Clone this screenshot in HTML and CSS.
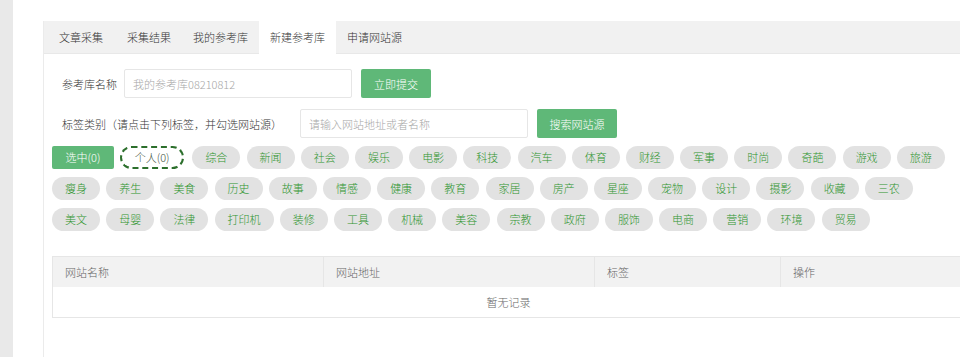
FILE: index.html
```html
<!DOCTYPE html>
<html lang="zh-CN">
  <head>
    <meta charset="UTF-8" />
    <title>新建参考库</title>
    <link rel="stylesheet" href="styles.css">
  </head>
  <body>
    <div class="page">
      <div class="rail"></div>
      <div class="main">
        <div class="panel">
          <ul class="tabs">
            <li>文章采集</li>
            <li>采集结果</li>
            <li>我的参考库</li>
            <li class="active">新建参考库</li>
            <li>申请网站源</li>
          </ul>

          <div class="panel-body">
            <div class="form-row first">
              <span class="form-label">参考库名称</span>
              <input class="input" type="text" placeholder="我的参考库08210812" />
              <button class="btn">立即提交</button>
            </div>

            <div class="form-row">
              <span class="form-label wide">标签类别（请点击下列标签，并勾选网站源）</span>
              <input class="input" type="text" placeholder="请输入网站地址或者名称" />
              <button class="btn btn-wide">搜索网站源</button>
            </div>

            <div class="tags">
              <span class="tag selected">选中(0)</span>
              <span class="tag mine">个人(0)</span>
              <span class="tag">综合</span>
              <span class="tag">新闻</span>
              <span class="tag">社会</span>
              <span class="tag">娱乐</span>
              <span class="tag">电影</span>
              <span class="tag">科技</span>
              <span class="tag">汽车</span>
              <span class="tag">体育</span>
              <span class="tag">财经</span>
              <span class="tag">军事</span>
              <span class="tag">时尚</span>
              <span class="tag">奇葩</span>
              <span class="tag">游戏</span>
              <span class="tag">旅游</span>
              <span class="tag">瘦身</span>
              <span class="tag">养生</span>
              <span class="tag">美食</span>
              <span class="tag">历史</span>
              <span class="tag">故事</span>
              <span class="tag">情感</span>
              <span class="tag">健康</span>
              <span class="tag">教育</span>
              <span class="tag">家居</span>
              <span class="tag">房产</span>
              <span class="tag">星座</span>
              <span class="tag">宠物</span>
              <span class="tag">设计</span>
              <span class="tag">摄影</span>
              <span class="tag">收藏</span>
              <span class="tag">三农</span>
              <span class="tag">美文</span>
              <span class="tag">母婴</span>
              <span class="tag">法律</span>
              <span class="tag">打印机</span>
              <span class="tag">装修</span>
              <span class="tag">工具</span>
              <span class="tag">机械</span>
              <span class="tag">美容</span>
              <span class="tag">宗教</span>
              <span class="tag">政府</span>
              <span class="tag">服饰</span>
              <span class="tag">电商</span>
              <span class="tag">营销</span>
              <span class="tag">环境</span>
              <span class="tag">贸易</span>
            </div>

            <table class="site-table">
              <colgroup>
                <col class="col-wide" />
                <col class="col-wide" />
                <col class="col-narrow" />
                <col />
              </colgroup>
              <thead>
                <tr>
                  <th>网站名称</th>
                  <th>网站地址</th>
                  <th>标签</th>
                  <th>操作</th>
                </tr>
              </thead>
              <tbody>
                <tr>
                  <td colspan="4">暂无记录</td>
                </tr>
              </tbody>
            </table>
          </div>
        </div>
      </div>
    </div>
  </body>
</html>
```

FILE: styles.css
```css
body {
  margin: 0;
  padding: 0;
  font-family: "Noto Sans CJK SC", "Microsoft YaHei", sans-serif;
  font-size: 11px;
  font-weight: 300;
  color: #333;
  background: #fff;
  overflow: hidden;
}

.page {
  display: flex;
  height: 357px;
}

.rail {
  flex: none;
  width: 13px;
  background: #e9e9e9;
}

.main {
  flex: none;
  padding: 21px 0 0 30px;
}

.panel {
  width: 930px;
  min-height: 336px;
  border-left: 1px solid #ebebeb;
}

/* tab bar */
.tabs {
  display: flex;
  margin: 0;
  padding: 0 0 0 4px;
  list-style: none;
  height: 32px;
  background: #f1f1f1;
  border-bottom: 1px solid #e8e8e8;
}

.tabs li {
  padding: 0 11px;
  line-height: 32px;
  cursor: pointer;
}

.tabs li:first-child {
  padding-right: 13px;
}

.tabs li.active {
  height: 33px;
  background: #fff;
}

.panel-body {
  padding: 15px 8px 0 8px;
}

/* form rows */
.form-row {
  display: flex;
  align-items: center;
  padding-left: 10px;
  margin-top: 11px;
}

.form-row.first {
  margin-top: 0;
}

.form-label {
  margin-right: 7px;
  white-space: nowrap;
}

.form-label.wide {
  margin-right: 18px;
}

.input {
  box-sizing: border-box;
  width: 228px;
  height: 29px;
  padding: 0 8px;
  border: 1px solid #e6e6e6;
  border-radius: 2px;
  font-family: inherit;
  font-size: 11px;
  font-weight: 300;
  color: #333;
  outline: none;
}

.input::placeholder {
  color: #a6a6a6;
}

.btn {
  width: 70px;
  height: 29px;
  margin-left: 9px;
  border: none;
  border-radius: 2px;
  background: #5fb878;
  color: #fff;
  font-family: inherit;
  font-size: 11px;
  font-weight: 300;
  cursor: pointer;
}

.btn-wide {
  width: 80px;
}

/* tag pills */
.tags {
  display: flex;
  flex-wrap: wrap;
  gap: 8px 6.2px;
  width: 913px;
  margin-top: 8px;
}

.tag {
  box-sizing: border-box;
  height: 23px;
  padding: 0 13px;
  line-height: 23px;
  border-radius: 12px;
  background: #e2e2e2;
  color: #2f952f;
  text-align: center;
  white-space: nowrap;
  cursor: pointer;
}

.tag.selected {
  width: 62px;
  padding: 0;
  border-radius: 2px;
  background: #5fb878;
  color: #fff;
}

.tag.mine {
  width: 64px;
  padding: 0;
  margin-right: 2px;
  line-height: 19px;
  border: 2px dashed #2c6f2c;
  background: transparent;
  color: #445544;
}

/* result table */
.site-table {
  width: 913px;
  margin-top: 25px;
  border-collapse: collapse;
  border: 1px solid #e6e6e6;
  table-layout: fixed;
}

.col-wide {
  width: 271px;
}

.col-narrow {
  width: 186px;
}

.site-table th {
  height: 30px;
  padding: 0 12px;
  background: #f2f2f2;
  border-right: 1px solid #e6e6e6;
  color: #666;
  font-weight: 300;
  text-align: left;
}

.site-table td {
  height: 28px;
  text-align: center;
  color: #666;
}
```
